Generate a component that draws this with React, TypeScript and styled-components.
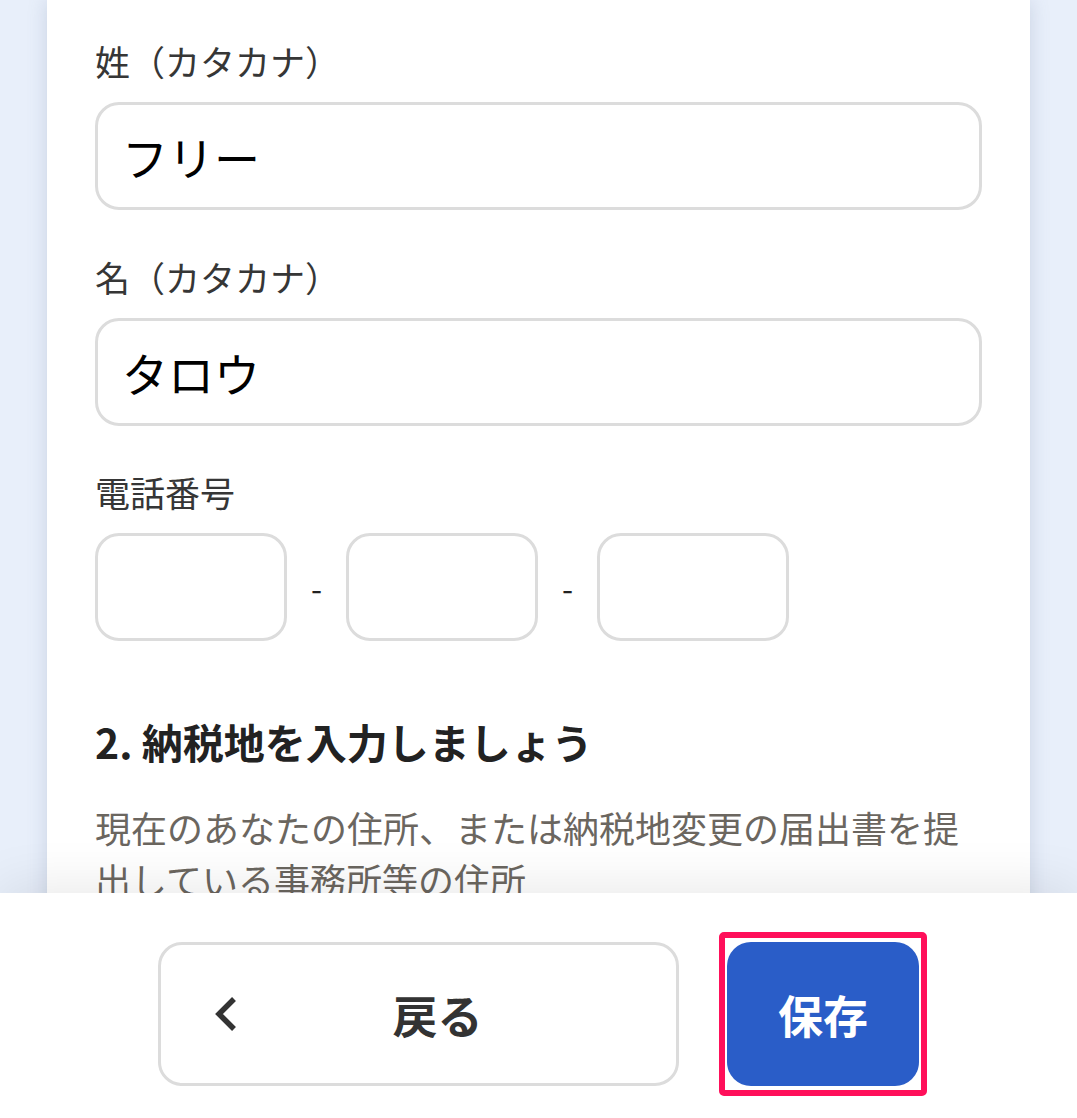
import React from 'react';
import styled, { createGlobalStyle } from 'styled-components';

const GlobalStyle = createGlobalStyle`
  html, body {
    margin: 0;
    padding: 0;
    height: 1118px;
    overflow: hidden;
    background: #e8effa;
    font-family: "Noto Sans CJK JP", "Noto Sans", sans-serif;
  }
  * { box-sizing: border-box; }
`;

const Page = styled.div`
  min-height: 1118px;
  padding: 0 47px;
`;

const Card = styled.main`
  background: #ffffff;
  min-height: 1300px;
  padding: 34px 48px 0;
  box-shadow: 0 0 18px rgba(90, 110, 150, 0.22);
`;

const Field = styled.div<{ gap?: number }>`
  margin-top: ${p => p.gap ?? 0}px;
`;

const Label = styled.div`
  font-size: 35px;
  line-height: 54px;
  color: #363636;
  margin-bottom: 14px;
`;

const TextInput = styled.div`
  height: 108px;
  border: 3px solid #dcdcdc;
  border-radius: 24px;
  padding: 0 24px;
  display: flex;
  align-items: center;
  font-size: 46px;
  color: #000;
`;

const PhoneRow = styled.div`
  display: flex;
  align-items: center;
`;

const PhoneBox = styled.div`
  width: 192px;
  height: 108px;
  border: 3px solid #dcdcdc;
  border-radius: 24px;
`;

const Dash = styled.span`
  width: 59px;
  text-align: center;
  font-size: 32px;
  color: #222;
  line-height: 1;
`;

const Heading = styled.h2`
  margin: 70px 0 0;
  font-size: 41px;
  line-height: 60px;
  font-weight: 700;
  color: #222;
`;

const Description = styled.p`
  margin: 30px 0 0;
  font-size: 36px;
  line-height: 52px;
  color: #6b665f;
`;

const BottomBar = styled.footer`
  position: fixed;
  left: 0;
  right: 0;
  bottom: 0;
  height: 225px;
  background: #ffffff;
  box-shadow: 0 -6px 50px rgba(0, 0, 0, 0.09);
  display: flex;
  justify-content: center;
  align-items: flex-start;
  gap: 48px;
  padding-top: 49px;
`;

const BackButton = styled.button`
  width: 521px;
  height: 144px;
  border: 3px solid #dcdcdc;
  border-radius: 24px;
  background: #fff;
  display: flex;
  align-items: center;
  padding: 0 40px 0 53px;
  font-family: inherit;
  font-size: 45px;
  font-weight: 700;
  color: #333;
  cursor: pointer;

  span {
    flex: 1;
    text-align: center;
  }
`;

const SaveWrap = styled.div`
  position: relative;
  display: flex;
`;

/* annotation frame drawn over the save button */
const Highlight = styled.div`
  position: absolute;
  inset: -10px -8px;
  border: 6px solid #ff0f5a;
  border-radius: 5px;
  pointer-events: none;
`;

const SaveButton = styled.button`
  width: 192px;
  height: 144px;
  border: none;
  border-radius: 24px;
  background: #2a5dc8;
  color: #fff;
  font-family: inherit;
  font-size: 45px;
  font-weight: 700;
  cursor: pointer;
`;

const Chevron = () => (
  <svg width="25" height="36" viewBox="0 0 25 36" fill="none">
    <path d="M20 3 L5 18 L20 33" stroke="#333" strokeWidth="5.5" />
  </svg>
);

export default function App() {
  return (
    <>
      <GlobalStyle />
      <Page>
        <Card>
          <Field>
            <Label>姓（カタカナ）</Label>
            <TextInput>フリー</TextInput>
          </Field>
          <Field gap={40}>
            <Label>名（カタカナ）</Label>
            <TextInput>タロウ</TextInput>
          </Field>
          <Field gap={39}>
            <Label>電話番号</Label>
            <PhoneRow>
              <PhoneBox />
              <Dash>-</Dash>
              <PhoneBox />
              <Dash>-</Dash>
              <PhoneBox />
            </PhoneRow>
          </Field>
          <Heading>2. 納税地を入力しましょう</Heading>
          <Description>
            現在のあなたの住所、または納税地変更の届出書を提出している事務所等の住所
          </Description>
        </Card>
      </Page>
      <BottomBar>
        <BackButton>
          <Chevron />
          <span>戻る</span>
        </BackButton>
        <SaveWrap>
          <SaveButton>保存</SaveButton>
          <Highlight />
        </SaveWrap>
      </BottomBar>
    </>
  );
}
